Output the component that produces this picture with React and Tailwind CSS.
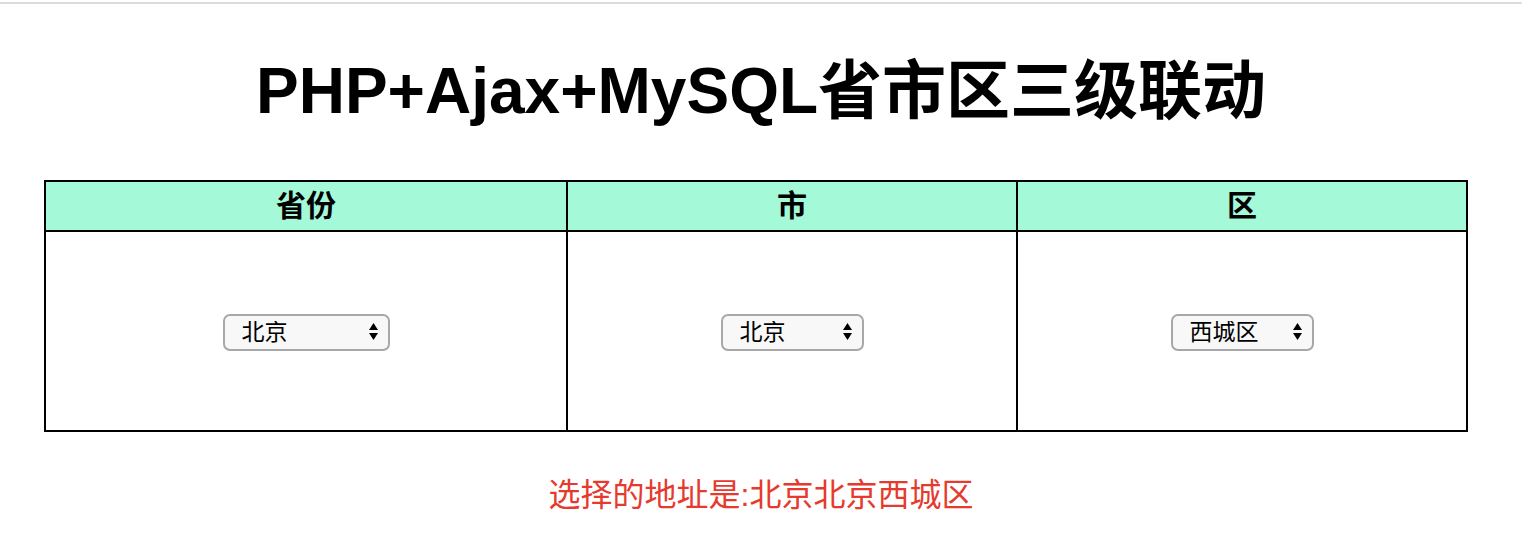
import React, { useState } from "react";

const data = {
  北京: { 北京: ["西城区", "东城区", "朝阳区", "海淀区"] },
};

const Picker = ({ value, options, onChange, width }) => (
  <div className={`relative inline-block align-middle ${width}`}>
    <select
      value={value}
      onChange={(e) => onChange(e.target.value)}
      className="w-full h-[37px] appearance-none rounded-[7px] border-2 border-[#a8a8a8] bg-[#f8f8f8] pl-[17px] pr-8 text-[23px] leading-none text-black outline-none"
    >
      {options.map((o) => (
        <option key={o} value={o}>
          {o}
        </option>
      ))}
    </select>
    {/* up/down arrows */}
    <svg
      className="pointer-events-none absolute right-[12px] top-[9px]"
      width="9"
      height="18"
      viewBox="0 0 9 18"
    >
      <path d="M4.5 0 L9 7 L0 7 Z" fill="#000" />
      <path d="M0 10 L9 10 L4.5 17 Z" fill="#000" />
    </svg>
  </div>
);

export default function App() {
  const [province, setProvince] = useState("北京");
  const [city, setCity] = useState("北京");
  const [area, setArea] = useState("西城区");

  const cities = Object.keys(data[province]);
  const areas = data[province][city];

  return (
    <div className="min-h-screen bg-white font-['Liberation_Sans','Noto_Sans_CJK_SC',sans-serif]">
      <div className="mt-[2px] h-[2px] bg-[#dcdbe0]" />

      <h1 className="mt-[54px] text-center text-[64px] font-bold leading-[66px] text-black">
        PHP+Ajax+MySQL省市区三级联动
      </h1>

      <table className="ml-[44px] mt-[56px] w-[1422px] table-fixed border-collapse border-2 border-black">
        <colgroup>
          <col className="w-[522px]" />
          <col className="w-[450px]" />
          <col className="w-[450px]" />
        </colgroup>
        <thead>
          <tr className="bg-[#a3f9d8]">
            <th className="h-[50px] border-2 border-black p-0 text-[30px] font-bold leading-none">省份</th>
            <th className="h-[50px] border-2 border-black p-0 text-[30px] font-bold leading-none">市</th>
            <th className="h-[50px] border-2 border-black p-0 text-[30px] font-bold leading-none">区</th>
          </tr>
        </thead>
        <tbody>
          <tr>
            <td className="h-[200px] border-2 border-black p-0 pt-[3px] text-center">
              <Picker value={province} options={Object.keys(data)} onChange={setProvince} width="w-[167px]" />
            </td>
            <td className="h-[200px] border-2 border-black p-0 pt-[3px] text-center">
              <Picker value={city} options={cities} onChange={setCity} width="w-[143px]" />
            </td>
            <td className="h-[200px] border-2 border-black p-0 pt-[3px] text-center">
              <Picker value={area} options={areas} onChange={setArea} width="w-[143px]" />
            </td>
          </tr>
        </tbody>
      </table>

      <p className="mt-[43px] text-center text-[32px] leading-[40px] text-[#e63a2e]">
        选择的地址是:{province}
        {city}
        {area}
      </p>
    </div>
  );
}
